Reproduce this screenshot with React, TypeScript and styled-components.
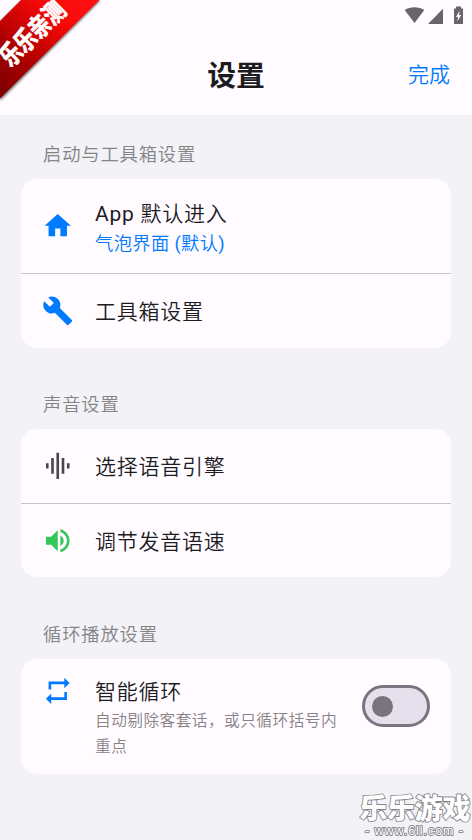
import React from "react";
import styled, { createGlobalStyle } from "styled-components";

const Global = createGlobalStyle`
  * { box-sizing: border-box; }
  body { margin: 0; background: #f2f2f7; }
`;

const Screen = styled.main`
  position: relative;
  width: 472px;
  height: 840px;
  overflow: hidden;
  background: #f2f2f7;
  font-family: Roboto, "Noto Sans CJK SC", sans-serif;
  font-weight: 350;
  color: #1c1b1f;
`;

const TopArea = styled.header`
  height: 115px;
  background: #fffbff;
`;

const StatusBar = styled.div`
  display: flex;
  justify-content: flex-end;
  height: 35px;
`;

const TitleBar = styled.div`
  display: grid;
  grid-template-columns: 1fr auto 1fr;
  align-items: center;
  height: 80px;
  padding: 0 22px;
`;

const Title = styled.h1`
  grid-column: 2;
  margin: 0;
  padding-top: 1px;
  font-size: 28.8px;
  font-weight: 700;
  line-height: 40px;
`;

const DoneButton = styled.button`
  justify-self: end;
  padding: 0;
  border: 0;
  background: none;
  font: 350 21px/30px Roboto, "Noto Sans CJK SC", sans-serif;
  color: #007aff;
`;

const Section = styled.section`
  padding: 0 21px;
`;

const SectionTitle = styled.h2<{ $top: number }>`
  margin: 0;
  padding: ${(p) => p.$top}px 0 10px 22px;
  font-size: 18.3px;
  font-weight: 350;
  letter-spacing: 0.85px;
  line-height: 28px;
  color: #848486;
`;

const Card = styled.div`
  overflow: hidden;
  border-radius: 16px;
  background: #fffbff;
`;

const Row = styled.div<{ $height: number; $divided?: boolean; $top?: boolean }>`
  display: flex;
  align-items: ${(p) => (p.$top ? "flex-start" : "center")};
  height: ${(p) => p.$height}px;
  padding: ${(p) => (p.$top ? "16px 21px 0" : "0 21px")};
  border-bottom: ${(p) => (p.$divided ? "1px solid #c8c4cd" : "0")};
`;

const Icon = styled.svg<{ $color: string }>`
  flex: none;
  width: 31.5px;
  height: 31.5px;
  margin-right: 21.5px;
  fill: ${(p) => p.$color};
`;

const Texts = styled.div<{ $top?: number }>`
  flex: 1;
  min-width: 0;
  padding-top: ${(p) => p.$top ?? 2}px;
`;

const Label = styled.div<{ $single?: boolean }>`
  padding-top: ${(p) => (p.$single ? 3 : 0)}px;
  font-size: 21px;
  letter-spacing: 0.75px;
  line-height: 31px;
`;

const Latin = styled.span`
  font-weight: 400;
`;

const Value = styled.div`
  font-size: 18.3px;
  letter-spacing: 0.36px;
  line-height: 27px;
  color: #007aff;
`;

const Description = styled.div`
  width: 252px;
  font-size: 15.7px;
  letter-spacing: 0.45px;
  line-height: 26px;
  color: #848486;
`;

const Switch = styled.button`
  flex: none;
  display: flex;
  align-items: center;
  width: 68px;
  height: 42px;
  margin-top: 10px;
  padding: 0 0 0 7px;
  border: 3px solid #79747e;
  border-radius: 21px;
  background: #e6e0ec;
`;

const Thumb = styled.span`
  width: 21px;
  height: 21px;
  border-radius: 50%;
  background: #79747e;
`;

const Ribbon = styled.svg`
  position: absolute;
  top: 0;
  left: 0;
`;

const Watermark = styled.svg`
  position: absolute;
  right: 0;
  bottom: 0;
`;

const paths = {
  home: "M10 20v-6h4v6h5v-8h3L12 3 2 12h3v8z",
  wrench:
    "M22.7 19l-9.1-9.1c.9-2.3.4-5-1.5-6.9-2-2-5-2.4-7.4-1.3L9 6 6 9 1.6 4.7C.4 7.1.9 10.1 2.9 12.1c1.9 1.9 4.6 2.4 6.9 1.5l9.1 9.1c.4.4 1 .4 1.4 0l2.3-2.3c.5-.4.5-1.1.1-1.4z",
  wave: "M7 18h2V6H7v12zm4 4h2V2h-2v20zm-8-8h2v-4H3v4zm12 4h2V6h-2v12zm4-8v4h2v-4h-2z",
  volume:
    "M3 9v6h4l5 5V4L7 9H3zm13.5 3c0-1.77-1.02-3.29-2.5-4.03v8.05c1.48-.73 2.5-2.25 2.5-4.02zM14 3.23v2.06c2.89.86 5 3.54 5 6.71s-2.11 5.85-5 6.71v2.06c4.01-.91 7-4.49 7-8.77s-2.99-7.86-7-8.77z",
  repeat: "M7 7h10v3l4-4-4-4v3H5v6h2V7zm10 10H7v-3l-4 4 4 4v-3h12v-6h-2v4z",
};

function Glyph({ name, color }: { name: keyof typeof paths; color: string }) {
  return (
    <Icon viewBox="0 0 24 24" $color={color}>
      <path d={paths[name]} />
    </Icon>
  );
}

export default function App() {
  return (
    <Screen>
      <Global />
      <TopArea>
        <StatusBar>
          <svg width="82" height="35" viewBox="0 0 82 35" fill="#68656a">
            <path d="M14.7 10C20 6.2 29 6.2 34.3 10L24.5 23z" />
            <path d="M53 8.8V24H38z" />
            <path d="M66 6.5h5v2h2V24h-9V8.500h2z" />
            <path d="M69.700 10.800L65.900 17h2.200l-.6 4.200 3.700-6.200H69z" fill="#fffbff" />
          </svg>
        </StatusBar>
        <TitleBar>
          <Title>设置</Title>
          <DoneButton>完成</DoneButton>
        </TitleBar>
      </TopArea>

      <Section>
        <SectionTitle $top={26}>启动与工具箱设置</SectionTitle>
        <Card>
          <Row $height={95} $divided>
            <Glyph name="home" color="#007aff" />
            <Texts $top={4}>
              <Label>
                <Latin>App</Latin> 默认进入
              </Label>
              <Value>
                气泡界面 <Latin>(</Latin>默认<Latin>)</Latin>
              </Value>
            </Texts>
          </Row>
          <Row $height={74}>
            <Glyph name="wrench" color="#007aff" />
            <Label $single>工具箱设置</Label>
          </Row>
        </Card>
      </Section>

      <Section>
        <SectionTitle $top={43}>声音设置</SectionTitle>
        <Card>
          <Row $height={75} $divided>
            <Glyph name="wave" color="#49454f" />
            <Label $single>选择语音引擎</Label>
          </Row>
          <Row $height={73}>
            <Glyph name="volume" color="#34c759" />
            <Label $single>调节发音语速</Label>
          </Row>
        </Card>
      </Section>

      <Section>
        <SectionTitle $top={44}>循环播放设置</SectionTitle>
        <Card>
          <Row $height={115} $top>
            <Glyph name="repeat" color="#007aff" />
            <Texts>
              <Label>智能循环</Label>
              <Description>自动剔除客套话，或只循环括号内重点</Description>
            </Texts>
            <Switch role="switch" aria-checked="false" aria-label="智能循环">
              <Thumb />
            </Switch>
          </Row>
        </Card>
      </Section>

      <Ribbon width="106" height="106" viewBox="0 0 106 106">
        <defs>
          <linearGradient id="ribbon" x1="0" y1="90" x2="80" y2="0" gradientUnits="userSpaceOnUse">
            <stop offset="0" stopColor="#800000" />
            <stop offset="0.3" stopColor="#a80000" />
            <stop offset="0.75" stopColor="#f40808" />
            <stop offset="1" stopColor="#ff1010" />
          </linearGradient>
          <filter id="soft">
            <feGaussianBlur stdDeviation="0.8" />
          </filter>
        </defs>
        <path d="M0 22L22 0H100V1L1 100H0z" fill="#777" filter="url(#soft)" />
        <path d="M0 21L21 0H99.500L0 98.500z" fill="url(#ribbon)" />
        <text
          transform="translate(10.500 68) rotate(-44.500) scale(0.87 1.12)"
          fontFamily="Noto Sans CJK SC, sans-serif"
          fontSize="23"
          fontWeight="700"
          fill="#fff"
          stroke="#fff"
          strokeWidth="0.7"
        >
          乐乐亲测
        </text>
      </Ribbon>

      <Watermark width="116" height="50" viewBox="356 790 116 50">
        <g
          fill="#fff"
          stroke="#85858a"
          strokeWidth="1.8"
          strokeLinejoin="round"
          paintOrder="stroke"
          textAnchor="middle"
        >
          <text x="415" y="818.500" fontFamily="Noto Sans CJK SC, sans-serif" fontSize="28" fontWeight="900" textLength="111">
            乐乐游戏
          </text>
          <text x="414" y="835" fontFamily="Liberation Sans, sans-serif" fontSize="12.500" textLength="98">
            - www.6ll.com -
          </text>
        </g>
      </Watermark>
    </Screen>
  );
}
